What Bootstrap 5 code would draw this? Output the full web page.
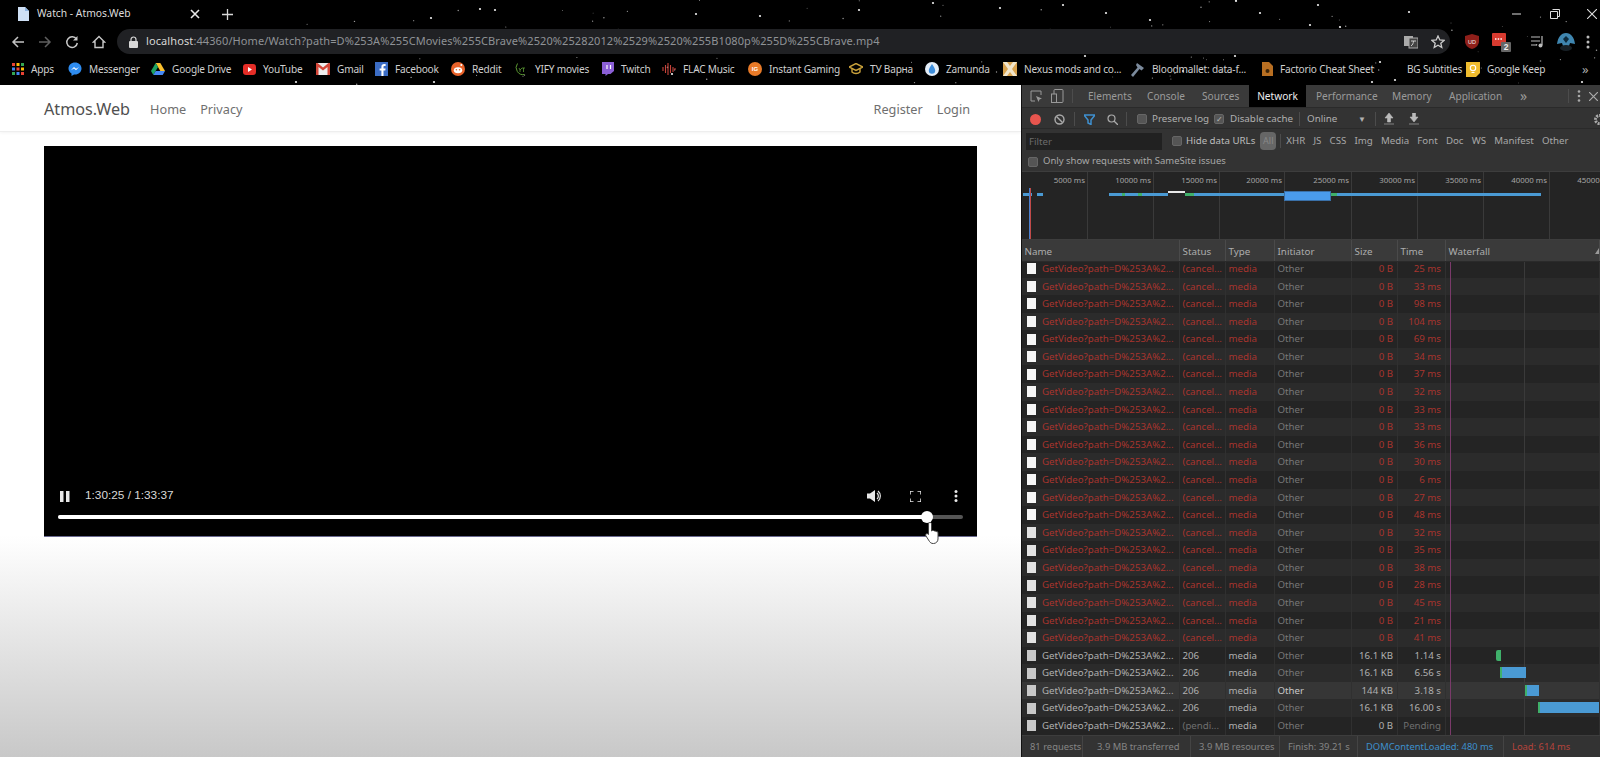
<!DOCTYPE html>
<html lang="en">
<head>
<meta charset="utf-8">
<title>Watch - Atmos.Web</title>
<link rel="stylesheet" href="https://cdn.jsdelivr.net/npm/bootstrap@5.3.0/dist/css/bootstrap.min.css">
<style>
html,body{height:757px;overflow:hidden;background:#000}
body{font-family:"Noto Sans","Open Sans",sans-serif;font-size:11px}
.shell{height:757px}
.chrome{height:85px;background:#000;position:relative;color:#d8d8d8;flex:none}
.stars{position:absolute;inset:0;pointer-events:none}
.chrome-row{position:relative}
.tabrow{height:28px}
.tabtitle{width:153px;margin-left:8px;color:#dcdcdc;font-size:10.3px}
.favicon{margin-left:17px}
.plusgap{margin-left:22px}
.navrow{height:27px}
.navbtn{width:27px;flex:none;text-align:center}
.urlbar{margin-left:5px;width:1339px;height:25px;background:#202124;border-radius:13px;color:#8f9296;font-size:11px;padding:0 5px 0 12px}
.urlbar b{font-weight:400;color:#d6d6d6}
.urltext{margin-left:8px;letter-spacing:.1px}
.urlicons{gap:13px}
.extras{margin-left:15px;width:136px}
.ext-b{margin-left:13px}
.ext-c{margin-left:19px}
.ext-d{margin-left:11px}
.ext-e{margin-left:10px}
.bookrow{height:30px;padding-left:12px;padding-bottom:1px}
.bm{flex:none;color:#cfcfcf;font-size:10.1px;white-space:nowrap;gap:7px}
.bmtext{letter-spacing:-.2px}
.winbtns{width:88px;padding-right:3px}
.site{width:1021px;flex:none;background:linear-gradient(#fff 0,#fff 67%,#c8c8c8 100%)}
.sitenav{height:47px;padding:3px 51px 0 44px;background:#fff;border-bottom:1px solid #eee;box-shadow:0 1px 3px rgba(0,0,0,.05)}
.sitebrand{font-size:16.2px;color:#505050}
.sitelink{font-size:12.7px;color:#6f6f6f}
.gapmenu{margin-left:20px;gap:14px}
.gapright{gap:14px}
.videoarea{padding:14px 44px 0}
.player{width:933px;height:391px;background:#000;border-bottom:1px solid #6a6a90;position:relative;color:#e6e6e6}
.ctrlrow{padding:0 14px 0 16px;height:20px;margin-bottom:9px}
.vtime{font-family:"Liberation Sans",sans-serif;font-size:11.8px;margin-left:15px;color:#d8d8d8}
.ctrlgap{gap:27px;margin-left:auto}
.ctrlbtn{width:14px;flex:none}
.track{height:4px;margin:0 14px 17px;background:#555;border-radius:2px;position:relative}
.trackfill{height:4px;background:#fff;border-radius:2px}
.thumb{position:absolute;top:-4px;width:12px;height:12px;border-radius:50%;background:#fff;margin-left:-6px}
.handcur{position:absolute;left:880px;top:375px}
.dev{flex:1 1 0;min-width:0;background:#2a2a2a;color:#b0b0b0;overflow:hidden;border-left:1px solid #111}
.dtabs{height:22px;background:#3a3a3a;flex:none}
.dtab{flex:none;height:22px;line-height:22px;color:#9a9a9a;font-size:10.1px;white-space:nowrap}
.dtab.cur{background:#000;color:#eee;text-align:center}
.tsep{width:1px;height:14px;background:#4c4c4c;flex:none}
.dbar2{height:22px;background:#333;border-top:1px solid #2a2a2a;border-bottom:1px solid #2a2a2a;font-size:9.8px;padding-top:2px;flex:none}
.dbar3{height:23px;background:#333;font-size:9.7px;flex:none;padding-top:1px}
.dbar4{height:19px;background:#333;padding-left:6px;gap:5px;font-size:9.5px;color:#a8a8a8;flex:none}
.sq{width:10px;height:10px;background:#555;border:1px solid #666;border-radius:2px;flex:none}
.filterin{width:136px;height:17px;margin-left:4px;background:#212121;color:#6c6c6c;padding-left:3px;line-height:17px}
.hideurls{color:#bcbcbc;margin-right:5px}
.ftypes{gap:8.2px;color:#a8a8a8;margin-left:5px}
.fall{background:#666;color:#888;border-radius:4px;padding:1px 2px;font-size:9px;height:18px;line-height:16px;width:16px;text-align:center}
.over{height:69px;background:#242424;position:relative;border-top:1px solid #3d3d3d;border-bottom:1px solid #3d3d3d;flex:none}
.ovl{position:absolute;top:0;bottom:0;width:1px;background:#3a3a3a}
.ovt{position:absolute;top:3px;transform:translateX(-100%);padding-right:2px;font-size:7.9px;color:#a4a4a4;white-space:nowrap}
.ovb{position:absolute;height:3px}
.lst-head,.lst-row{display:grid;grid-template-columns:158px 46px 49px 77px 46px 48px 1fr}
.lst-head{height:22px;line-height:23px;background:#3a3a3a;font-size:9.8px;color:#adadad;flex:none;border-bottom:1px solid #2a2a2a}
.lst-head>div{padding-left:2.5px;border-right:1px solid #4a4a4a;white-space:nowrap;overflow:hidden;position:relative}
.sortup{position:absolute;right:0;top:8px;width:0;height:0;border-left:4px solid transparent;border-right:4px solid transparent;border-bottom:6px solid #999;margin-right:-4px}
.lst-wrap{flex:1 1 0;min-height:0;overflow:hidden;position:relative;background:#242424}
.lst-row{height:17.58px;line-height:17.58px;font-size:9.7px;color:#b0b0b0}
.lst-row:nth-child(even){background:#2b2b2b}
.lst-row.rowhi{background:#363636}
.lst-row>div{padding:0 4px 0 2.5px;white-space:nowrap;overflow:hidden;border-right:1px solid #303030;position:relative}
.lst-row .rt{text-align:right}
.lst-row .cname{padding:0 0 0 5px;display:flex;align-items:center;gap:6px}
.lst-row .cini{color:#777}
.lst-row .ccur{color:#c8c8c8}
.errc .cname span,.errc .cst,.errc .cty,.errc .rt{color:#a8342e}
.pend{color:#6f6f6f}
.doc{width:9px;height:11px;background:#f6f6f6;flex:none}
.doc3{background:#e2e2e2}
.doc2{background:#c8c8c8}
.vline{position:absolute;top:0;bottom:0;width:1px;z-index:0}
.wbar{position:absolute;top:3px;height:11px;background:#4a9ad4;z-index:2;border-radius:2px 0 0 2px}
.wbar i{position:absolute;left:0;top:0;bottom:0;width:2px;background:#3fb06a;display:block}
.dfoot{height:22px;background:#333;font-size:9.4px;color:#858585;flex:none;border-top:1px solid #3d3d3d}
.fitem{height:22px;line-height:22px;flex:none;padding-left:8px;border-right:1px solid #444;white-space:nowrap}
.fblue{color:#3d8fcc}
.fred{color:#b5443c}
</style>
</head>
<body>
<div class="shell d-flex flex-column">
  <div class="chrome d-flex flex-column">
    <svg class="stars" id="stars" width="1600" height="85" aria-hidden="true"></svg>

    <div class="chrome-row tabrow d-flex align-items-center">
      <svg class="favicon" width="12" height="14" viewBox="0 0 12 14"><path d="M1 0h7l4 4v10H1z" fill="#cfe0f5"/><path d="M8 0l4 4H8z" fill="#8fb4e0"/></svg>
      <span class="tabtitle">Watch - Atmos.Web</span>
      <svg width="10" height="10" viewBox="0 0 10 10"><path d="M1 1l8 8M9 1l-8 8" stroke="#e8e8e8" stroke-width="1.6"/></svg>
      <svg class="plusgap" width="11" height="11" viewBox="0 0 11 11"><path d="M5.5 0v11M0 5.5h11" stroke="#d8d8d8" stroke-width="1.3"/></svg>
      <div class="winbtns d-flex justify-content-between align-items-center ms-auto">
        <svg width="10" height="10" viewBox="0 0 10 10"><path d="M0 5h9" stroke="#ddd"/></svg>
        <svg width="10" height="10" viewBox="0 0 10 10"><path d="M2.5.5h7v7h-2M.5 2.5h7v7h-7z" stroke="#ddd" fill="none"/></svg>
        <svg width="10" height="10" viewBox="0 0 10 10"><path d="M0 0l10 10M10 0L0 10" stroke="#ddd" stroke-width="1.1"/></svg>
      </div>
    </div>

    <div class="chrome-row navrow d-flex align-items-center ps-1">
      <div class="navbtn"><svg width="14" height="14" viewBox="0 0 14 14"><path d="M13 7H2M7 2L2 7l5 5" stroke="#c4c4c4" stroke-width="1.5" fill="none"/></svg></div>
      <div class="navbtn"><svg width="14" height="14" viewBox="0 0 14 14"><path d="M1 7h11M7 2l5 5-5 5" stroke="#5f5f5f" stroke-width="1.5" fill="none"/></svg></div>
      <div class="navbtn"><svg width="14" height="14" viewBox="0 0 14 14"><path d="M11.5 4.2A5.3 5.3 0 1 0 12.3 8" stroke="#c8c8c8" stroke-width="1.5" fill="none"/><path d="M12.5 1v4.5H8z" fill="#c8c8c8"/></svg></div>
      <div class="navbtn"><svg width="14" height="14" viewBox="0 0 14 14"><path d="M7 1.5L1.5 7H3v5.5h8V7h1.500z" stroke="#c8c8c8" stroke-width="1.4" fill="none"/></svg></div>
      <div class="urlbar d-flex align-items-center">
        <svg width="9" height="12" viewBox="0 0 9 12"><rect y="5" width="9" height="7" rx="1" fill="#d8d8d8"/><path d="M2 5V3.500a2.500 2.500 0 0 1 5 0V5" stroke="#d8d8d8" fill="none" stroke-width="1.200"/></svg>
        <span class="urltext text-nowrap"><b>localhost</b>:44360/Home/Watch?path=D%253A%255CMovies%255CBrave%2520%25282012%2529%2520%255B1080p%255D%255CBrave.mp4</span>
        <div class="ms-auto d-flex align-items-center urlicons">
          <svg width="14" height="14" viewBox="0 0 14 14"><rect x="0" y="1" width="9" height="10" fill="#aaa"/><rect x="5" y="3" width="9" height="10" fill="#444" stroke="#aaa"/><path d="M7 6h5M9.500 6c0 2-1 4-2.500 5" stroke="#ccc" fill="none"/></svg>
          <svg width="14" height="14" viewBox="0 0 14 14"><path d="M7 1l1.800 4 4.200.4-3.200 2.800 1 4.300L7 10.300 3.200 12.500l1-4.300L1 5.400 5.200 5z" stroke="#ccc" stroke-width="1.300" fill="none"/></svg>
        </div>
      </div>
      <div class="extras d-flex align-items-center">
        <svg width="14" height="15" viewBox="0 0 14 15"><path d="M7 0l7 2v5c0 4-3 7-7 8-4-1-7-4-7-8V2z" fill="#8f1f1a"/><text x="7" y="9.500" font-size="5.500" fill="#eee" text-anchor="middle" font-family="Liberation Sans">UD</text></svg>
        <svg class="ext-b" width="20" height="20" viewBox="0 0 20 20"><rect x="0" y="1" width="14" height="13" rx="1" fill="#d83b30"/><path d="M3 7h8" stroke="#fff" stroke-width="1.500" stroke-dasharray="1.500 1.200"/><rect x="9" y="10" width="10" height="10" rx="1" fill="#666"/><text x="14" y="18" font-size="8.500" font-weight="700" fill="#eee" text-anchor="middle" font-family="Liberation Sans">2</text></svg>
        <svg class="ext-c" width="14" height="13" viewBox="0 0 14 13"><path d="M0 2h9M0 6h9M0 10h6" stroke="#bbb" stroke-width="1.200"/><path d="M11 1v9" stroke="#bbb" stroke-width="1.200"/><circle cx="9.500" cy="10.500" r="2" fill="#bbb"/></svg>
        <svg class="ext-d" width="20" height="20" viewBox="0 0 20 20"><path d="M10 1c5 0 8 4 9 11l-5-1-1 3H7l-1-3-5 1C2 5 5 1 10 1z" fill="#3f86b0"/><path d="M7 7l3-3 3 3-3 4z" fill="#0d2a3c"/><ellipse cx="10" cy="16" rx="6" ry="3" fill="#172026"/></svg>
        <svg class="ext-e" width="4" height="14" viewBox="0 0 4 14"><circle cx="2" cy="2" r="1.500" fill="#bbb"/><circle cx="2" cy="7" r="1.500" fill="#bbb"/><circle cx="2" cy="12" r="1.500" fill="#bbb"/></svg>
      </div>
    </div>

    <div class="chrome-row bookrow d-flex align-items-center" id="books"></div>
  </div>

  <div class="d-flex flex-grow-1" style="min-height:0">
    <div class="site d-flex flex-column">
      <nav class="sitenav d-flex align-items-center">
        <span class="sitebrand">Atmos.Web</span>
        <div class="d-flex gapmenu"><span class="sitelink">Home</span><span class="sitelink">Privacy</span></div>
        <div class="d-flex ms-auto gapright"><span class="sitelink">Register</span><span class="sitelink">Login</span></div>
      </nav>
      <div class="videoarea">
        <div class="player d-flex flex-column justify-content-end">
          <div class="ctrlrow d-flex align-items-center">
            <svg width="10" height="11" viewBox="0 0 10 11"><path d="M0 0h3.500v11H0zM6 0h3.500v11H6z" fill="#e8e8e8"/></svg>
            <span class="vtime">1:30:25 / 1:33:37</span>
            <div class="d-flex align-items-center ctrlgap">
              <div class="ctrlbtn d-flex justify-content-center"><svg width="14" height="14" viewBox="0 0 14 14"><path d="M0 4.500h3L8 1v12L3 9.500H0z" fill="#e8e8e8"/><path d="M10 4a4 4 0 0 1 0 6M11 2a6.500 6.500 0 0 1 0 10" stroke="#e8e8e8" fill="none" stroke-width="1.200"/></svg></div>
              <div class="ctrlbtn d-flex justify-content-center"><svg width="11" height="11" viewBox="0 0 11 11"><path d="M0 3.500V0h3.500M7.500 0H11v3.500M11 7.500V11H7.500M3.500 11H0V7.500" stroke="#e8e8e8" fill="none" stroke-width="1.500"/></svg></div>
              <div class="ctrlbtn d-flex justify-content-center"><svg width="4" height="12" viewBox="0 0 4 12"><circle cx="2" cy="1.500" r="1.500" fill="#e8e8e8"/><circle cx="2" cy="6" r="1.500" fill="#e8e8e8"/><circle cx="2" cy="10.500" r="1.500" fill="#e8e8e8"/></svg></div>
            </div>
          </div>
          <div class="track"><div class="trackfill" style="width:96%"></div><div class="thumb" style="left:96%"></div></div>
          <svg class="handcur" width="20" height="24" viewBox="0 0 20 24"><path d="M6 1.500c1 0 1.500.7 1.500 1.500v7l1-.5c.8-.3 1.500.2 1.800.6.800-.4 1.500 0 1.900.6.900-.3 1.800.3 1.800 1.300V18c0 2.500-2 4.500-4.500 4.500H9c-1.500 0-2.700-.8-3.500-2L2 15c-.6-1-.3-1.800.4-2.200.8-.4 1.500 0 2.100.7l.1-10.500C4.600 2.200 5 1.500 6 1.500z" fill="#fff" stroke="#444" stroke-width="1"/></svg>
        </div>
      </div>
    </div>

    <div class="dev d-flex flex-column">
      <div class="dtabs d-flex align-items-center" id="dtabs">
        <svg class="ms-2" width="13" height="13" viewBox="0 0 13 13"><path d="M5 11H1V1h10v4" stroke="#999" fill="none"/><path d="M6 6l6 2.500-2.500 1L8.500 12z" fill="#999"/></svg>
        <svg class="ms-2" width="13" height="14" viewBox="0 0 13 14"><rect x="3" y=".5" width="9" height="13" rx="1" stroke="#999" fill="none"/><rect x=".5" y="5" width="5" height="8.500" fill="#3a3a3a" stroke="#999"/></svg>
        <span class="tsep" style="margin-left:8px"></span>
        <span class="dtab" style="margin-left:15px;width:59px">Elements</span>
        <span class="dtab" style="width:55px">Console</span>
        <span class="dtab" style="width:47px">Sources</span>
        <span class="dtab cur" style="width:57px">Network</span>
        <span class="dtab" style="margin-left:10px;width:76px">Performance</span>
        <span class="dtab" style="width:57px">Memory</span>
        <span class="dtab" style="width:71px">Application</span>
        <span class="dtab" style="font-size:14px">»</span>
        <span class="tsep ms-auto" style="margin-right:8px"></span>
        <svg width="4" height="12" viewBox="0 0 4 12"><circle cx="2" cy="1.500" r="1.300" fill="#aaa"/><circle cx="2" cy="6" r="1.300" fill="#aaa"/><circle cx="2" cy="10.500" r="1.300" fill="#aaa"/></svg>
        <svg class="ms-2" width="9" height="9" viewBox="0 0 9 9" style="margin-right:2px"><path d="M0 0l9 9M9 0L0 9" stroke="#aaa" stroke-width="1.200"/></svg>
      </div>
      <div class="dbar2 d-flex align-items-center">
        <svg class="ms-2" width="11" height="11"><circle cx="5.500" cy="5.500" r="5.500" fill="#e8554e"/></svg>
        <svg style="margin-left:13px" width="11" height="11" viewBox="0 0 11 11"><circle cx="5.500" cy="5.500" r="4.500" stroke="#aaa" stroke-width="1.400" fill="none"/><path d="M2.500 2.500l6 6" stroke="#aaa" stroke-width="1.400"/></svg>
        <span class="tsep" style="margin:0 9px"></span>
        <svg width="11" height="11" viewBox="0 0 11 11"><path d="M0 1h11L7 6v4.500L4 9V6z" stroke="#3f90d0" stroke-width="1.500" fill="none"/></svg>
        <svg style="margin-left:12px" width="11" height="11" viewBox="0 0 11 11"><circle cx="4.500" cy="4.500" r="3.500" stroke="#aaa" fill="none" stroke-width="1.200"/><path d="M7 7l4 4" stroke="#aaa" stroke-width="1.300"/></svg>
        <span class="tsep" style="margin:0 10px 0 8px"></span>
        <span class="sq"></span><span style="margin-left:5px;width:62px">Preserve log</span>
        <span class="sq d-flex align-items-center justify-content-center" style="color:#bbb;font-size:8px;line-height:1">✓</span><span style="margin-left:6px;width:64px">Disable cache</span>
        <span class="tsep" style="margin:0 7px 0 5px"></span>
        <span style="width:51px">Online</span>
        <span style="font-size:8px">▼</span>
        <span class="tsep" style="margin:0 8px 0 9px"></span>
        <svg width="10" height="12" viewBox="0 0 10 12"><path d="M5 0l4 5H6.500v4h-3V5H1zM0 11h10" fill="#bbb" stroke="#bbb" stroke-width=".6"/></svg>
        <svg style="margin-left:15px" width="10" height="12" viewBox="0 0 10 12"><path d="M5 9L1 4h2.500V0h3v4H9zM0 11h10" fill="#bbb" stroke="#bbb" stroke-width=".6"/></svg>
        <svg class="ms-auto" width="13" height="13" viewBox="0 0 13 13" style="margin-right:-6px"><circle cx="6.500" cy="6.500" r="4" stroke="#aaa" stroke-width="3" fill="none" stroke-dasharray="2 1"/></svg>
      </div>
      <div class="dbar3 d-flex align-items-center">
        <div class="filterin">Filter</div>
        <span class="sq" style="margin-left:10px"></span>
        <span class="ms-1 hideurls">Hide data URLs</span>
        <span class="fall">All</span>
        <span class="tsep" style="margin-left:4px"></span>
        <div class="ftypes d-flex" id="ftypes"></div>
      </div>
      <div class="dbar4 d-flex align-items-center"><span class="sq"></span><span>Only show requests with SameSite issues</span></div>
      <div class="over" id="over"></div>
      <div class="lst-head">
        <div>Name</div><div>Status</div><div>Type</div><div>Initiator</div><div>Size</div><div>Time</div><div>Waterfall<span class="sortup"></span></div>
      </div>
      <div class="lst-wrap" id="wrap"></div>
      <div class="dfoot d-flex">
        <div class="fitem" style="width:61px">81 requests</div>
        <div class="fitem" style="width:108px;padding-left:14px">3.9 MB transferred</div>
        <div class="fitem" style="width:89px">3.9 MB resources</div>
        <div class="fitem" style="width:78px">Finish: 39.21 s</div>
        <div class="fitem fblue" style="width:146px">DOMContentLoaded: 480 ms</div>
        <div class="fitem fred border-0">Load: 614 ms</div>
      </div>
    </div>
  </div>
</div>

<script>
// starfield
(function(){
  var s=document.getElementById('stars'),o='';
  var big=[[480,9],[495,10],[760,16],[696,14],[431,18],[1106,13],[1063,5],[1236,1],[859,10],[933,3],[1310,25],[1318,5],[1000,8],[1150,20],[1260,13],[1409,12],[1340,27],[1235,56],[1265,75],[1183,71],[296,82],[434,82],[1582,82],[1347,49],[1380,62],[1372,82],[672,74],[1085,56],[1200,52],[1395,80]];
  big.forEach(function(p){o+='<circle cx="'+p[0]+'" cy="'+p[1]+'" r="1.100" fill="#eee"/>';});
  var x=12345;function r(){x=(x*1103515245+12345)&2147483647;return x/2147483647;}
  for(var i=0;i<110;i++){var cx=300+r()*1300,cy=r()*85;if(cy>31&&cy<56&&cx<1456)continue;o+='<circle cx="'+cx.toFixed(1)+'" cy="'+cy.toFixed(1)+'" r="'+(.4+r()*.4).toFixed(2)+'" fill="#9a9a9a"/>';}
  s.innerHTML=o;
})();
// bookmarks: [icon svg, text, x of this item]
(function(){
  var I={
  apps:'<svg width="12" height="12" viewBox="0 0 12 12">'+[['#ea4335',0,0],['#fbbc05',4.500,0],['#34a853',9,0],['#4285f4',0,4.500],['#ea4335',4.500,4.500],['#fbbc05',9,4.500],['#34a853',0,9],['#4285f4',4.500,9],['#ea4335',9,9]].map(function(d){return '<rect x="'+d[1]+'" y="'+d[2]+'" width="3" height="3" fill="'+d[0]+'"/>';}).join('')+'</svg>',
  msg:'<svg width="14" height="14" viewBox="0 0 14 14"><path d="M7 .5c3.700 0 6.500 2.600 6.500 6S10.700 12.500 7 12.500l-1-.1L3.500 14v-2.500C1.600 10.400.5 8.600.5 6.500.5 3.100 3.300.5 7 .5z" fill="#2e8cf0"/><path d="M2.800 8.300L6 5l2 1.700L11 5 8 8.300 6 6.600z" fill="#fff"/></svg>',
  drive:'<svg width="14" height="12" viewBox="0 0 14 12"><path d="M4.700 0h4.600l4.700 8H9.300z" fill="#fbc02d"/><path d="M4.700 0L0 8l2.300 4L7 4z" fill="#1ea362"/><path d="M2.300 12h9.400L14 8H4.700z" fill="#4688f4"/></svg>',
  yt:'<svg width="13" height="11" viewBox="0 0 13 11"><rect width="13" height="11" rx="3" fill="#e52d27"/><path d="M5 3l4 2.500L5 8z" fill="#fff"/></svg>',
  gm:'<svg width="14" height="12" viewBox="0 0 14 12"><rect width="14" height="12" fill="#eee"/><path d="M0 0v12h2.500V4L7 7.500 11.500 4v8H14V0h-1.500L7 4.500 1.500 0z" fill="#d44638"/></svg>',
  fb:'<svg width="13" height="14" viewBox="0 0 13 14"><rect width="13" height="14" fill="#3b6cc4"/><path d="M8.500 14V8.500h1.800l.3-2.100H8.500V5c0-.6.200-1 1-1h1.100V2.100C10.300 2 9.700 2 9.100 2 7.500 2 6.400 3 6.400 4.800v1.600H4.600v2.100h1.800V14z" fill="#fff"/></svg>',
  rd:'<svg width="14" height="14" viewBox="0 0 14 14"><circle cx="7" cy="7" r="7" fill="#e8622a"/><ellipse cx="7" cy="8.300" rx="4.200" ry="3" fill="#fff"/><circle cx="5.400" cy="7.800" r=".8" fill="#e8622a"/><circle cx="8.600" cy="7.800" r=".8" fill="#e8622a"/><circle cx="10.300" cy="3" r="1" fill="#fff"/></svg>',
  yts:'<svg width="14" height="14" viewBox="0 0 14 14"><path d="M3.500 1.500a7 7 0 0 0 7 11" stroke="#5c9a32" fill="none"/><path d="M5 6l1 2v2M8 6l-2 2M8 6h3M9.500 6v4" stroke="#5c9a32" fill="none" stroke-width=".8"/></svg>',
  tw:'<svg width="13" height="14" viewBox="0 0 13 14"><path d="M1 0h12v9l-3.500 3H7l-2.500 2v-2H1z" fill="#8b5fd6"/><path d="M6 3v4M9.500 3v4" stroke="#fff" stroke-width="1.200"/></svg>',
  fl:'<svg width="14" height="14" viewBox="0 0 14 14"><path d="M1 5v4M3.500 3v8M6 1v12M8.500 3v8M11 5v5M13 6v2" stroke="#c7433a" stroke-width="1.100"/></svg>',
  ig:'<svg width="14" height="14" viewBox="0 0 14 14"><circle cx="7" cy="7" r="7" fill="#e87a28"/><text x="7" y="9.300" font-size="6" fill="#fff" text-anchor="middle" font-family="Liberation Sans" font-weight="700">IG</text></svg>',
  ty:'<svg width="14" height="12" viewBox="0 0 14 12"><path d="M0 4l7-3.500L14 4 7 7.500z" fill="none" stroke="#c9a13b" stroke-width="1.400"/><path d="M3 6v3c2 2 6 2 8 0V6" stroke="#c9a13b" stroke-width="1.400" fill="none"/></svg>',
  za:'<svg width="14" height="14" viewBox="0 0 14 14"><circle cx="7" cy="7" r="7" fill="#e4eef8"/><path d="M7 2c2 3 3.200 4.700 3.200 6.500a3.200 3.200 0 0 1-6.400 0C3.800 6.700 5 5 7 2z" fill="#3e8fdc"/></svg>',
  nx:'<svg width="14" height="14" viewBox="0 0 14 14"><rect width="14" height="14" fill="#d9a34e"/><path d="M0 0l5 7-5 7h4l3-4 3 4h4L9 7l5-7h-4L7 4 4 0z" fill="#f1e6cc"/></svg>',
  bl:'<svg width="14" height="15" viewBox="0 0 14 15"><path d="M6 1l7 5-2.500 2.500L8.500 7 2 15 0 13l6.500-7.500L5 3z" fill="#7b8a9c"/></svg>',
  fa:'<svg width="11" height="14" viewBox="0 0 11 14"><path d="M0 0h7l4 4v10H0z" fill="#b86f22"/><circle cx="5.500" cy="9" r="2" fill="#3c2408"/></svg>',
  no:'<span style="width:14px;display:inline-block"></span>',
  kp:'<svg width="14" height="15" viewBox="0 0 14 15"><path d="M0 0h14v11l-4 4H0z" fill="#f0bc2e"/><circle cx="7" cy="6" r="2.700" fill="none" stroke="#fff" stroke-width="1.100"/><path d="M5.500 10.500h3" stroke="#fff"/></svg>'
  };
  var d=[['apps','Apps',12],['msg','Messenger',68],['drive','Google Drive',151],['yt','YouTube',243],['gm','Gmail',316],['fb','Facebook',375],['rd','Reddit',451],['yts','YIFY movies',514],['tw','Twitch',601],['fl','FLAC Music',662],['ig','Instant Gaming',748],['ty','ТУ Варна',849],['za','Zamunda',925],['nx','Nexus mods and co...',1003],['bl','Bloodmallet: data-f...',1131],['fa','Factorio Cheat Sheet',1262],['no','BG Subtitles',1386],['kp','Google Keep',1466]];
  var h='';
  d.forEach(function(b,i){var w=(i<d.length-1?d[i+1][2]:1582)-b[2];h+='<div class="bm d-flex align-items-center" style="width:'+w+'px">'+I[b[0]]+'<span class="bmtext">'+b[1]+'</span></div>';});
  h+='<span style="color:#aaa;font-size:13px">»</span>';
  document.getElementById('books').innerHTML=h;
})();
// filter types
document.getElementById('ftypes').innerHTML=['XHR','JS','CSS','Img','Media','Font','Doc','WS','Manifest','Other'].map(function(t){return '<span>'+t+'</span>';}).join('');
// overview (left offsets are relative to devtools at x=1022)
(function(){
  var x0=1022,o='';
  [[1087,'5000 ms'],[1153,'10000 ms'],[1219,'15000 ms'],[1284,'20000 ms'],[1351,'25000 ms'],[1417,'30000 ms'],[1483,'35000 ms'],[1549,'40000 ms'],[1615,'45000 ms']].forEach(function(g){
    o+='<div class="ovl" style="left:'+(g[0]-x0)+'px"></div><div class="ovt" style="left:'+(g[0]-x0)+'px">'+g[1]+'</div>';
  });
  [[1023,1032,'#4a9ad4'],[1037,1043,'#4a9ad4'],[1109,1168,'#4a9ad4'],[1122,1125,'#3fb06a'],[1138,1142,'#3fb06a'],[1185,1194,'#3fb06a'],[1194,1285,'#4a9ad4'],[1330,1337,'#3fb06a'],[1337,1541,'#4a9ad4']].forEach(function(b){
    o+='<div class="ovb" style="top:21px;left:'+(b[0]-x0)+'px;width:'+(b[1]-b[0])+'px;background:'+b[2]+'"></div>';
  });
  o+='<div class="ovb" style="top:19px;left:'+(1168-x0)+'px;width:17px;height:2px;background:#e8e8e8"></div>';
  o+='<div class="ovb" style="top:20px;left:'+(1285-x0)+'px;width:45px;height:8px;background:#4a9bec;outline:1px solid #3a70a8"></div>';
  o+='<div class="ovl" style="left:7px;top:16px;background:#4a7fd0"></div><div class="ovl" style="left:8px;top:16px;background:#c04a48"></div>';
  document.getElementById('over').innerHTML=o;
})();
// requests
(function(){
  var T=['25 ms','33 ms','98 ms','104 ms','69 ms','34 ms','37 ms','32 ms','33 ms','33 ms','36 ms','30 ms','6 ms','27 ms','48 ms','32 ms','35 ms','38 ms','28 ms','45 ms','21 ms','41 ms'];
  var n='GetVideo?path=D%253A%2...';
  function row(cls,st,sz,tm,bar,ini,doc){
    return '<div class="lst-row '+cls+'"><div class="cname"><i class="doc '+doc+'"></i><span>'+n+'</span></div><div class="cst">'+st+'</div><div class="cty">media</div><div class="cini '+ini+'">Other</div><div class="rt">'+sz+'</div><div class="rt">'+tm+'</div><div>'+bar+'</div></div>';
  }
  function bar(l,w){return '<span class="wbar" style="left:'+l+'px;width:'+w+'px"><i></i></span>';}
  var h='';
  T.forEach(function(t,i){h+=row('errc','(cancel...','0 B',t,'','',i>14?'doc3':'');});
  h+=row('','206','16.1 KB','1.14 s','<span class="wbar" style="left:50px;width:5px;background:#3fb06a"></span>','','doc2');
  h+=row('','206','16.1 KB','6.56 s',bar(54,26),'','doc2');
  h+=row('rowhi','206','144 KB','3.18 s',bar(79,14),'ccur','doc2');
  h+=row('','206','16.1 KB','16.00 s',bar(92,70),'','doc2');
  h+=row('','<span class="pend">(pendi...</span>','0 B','<span class="pend">Pending</span>','','','doc2');
  var w=document.getElementById('wrap');
  w.innerHTML='<div class="vline" style="left:428px;background:#7a3a6a"></div><div class="vline" style="left:502px;background:#3a3a3a"></div><div style="margin-top:-2px">'+h+'</div>';
})();
</script>
<script src="https://cdn.jsdelivr.net/npm/bootstrap@5.3.0/dist/js/bootstrap.bundle.min.js"></script>
</body>
</html>
